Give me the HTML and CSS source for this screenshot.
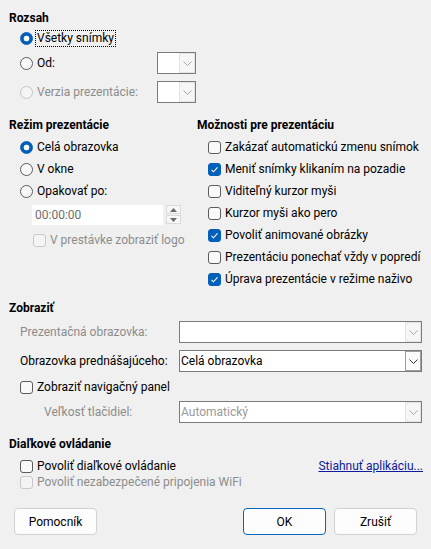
FILE: index.html
```html
<!DOCTYPE html>
<html lang="sk">
<head>
<meta charset="utf-8">
<title>Prezentácia</title>
<link rel="stylesheet" href="styles.css">
</head>
<body>
<div class="dlg">
  <div class="heading">Rozsah</div>
  <div class="row r1 indent"><span class="radio on"></span><span class="focus">Všetky snímky</span></div>
  <div class="row r2 rgrid">
    <div class="row indent"><span class="radio"></span><span>Od:</span></div>
    <div class="combo small"><span class="val"></span><span class="btn"><svg width="9" height="5" viewBox="0 0 9 5"><path d="M0.5 0.5l4 4 4-4" fill="none" stroke="#a8a8a8" stroke-width="1"/></svg></span></div>
  </div>
  <div class="row r3 rgrid">
    <div class="row indent dis"><span class="radio off"></span><span>Verzia prezentácie:</span></div>
    <div class="combo small"><span class="val"></span><span class="btn"><svg width="9" height="5" viewBox="0 0 9 5"><path d="M0.5 0.5l4 4 4-4" fill="none" stroke="#a8a8a8" stroke-width="1"/></svg></span></div>
  </div>

  <div class="cols">
    <div class="col">
      <div class="heading">Režim prezentácie</div>
      <div class="row first indent"><span class="radio on"></span><span>Celá obrazovka</span></div>
      <div class="row indent"><span class="radio"></span><span>V okne</span></div>
      <div class="row indent"><span class="radio"></span><span>Opakovať po:</span></div>
      <div class="timerow">
        <div class="time">00:00:00</div>
        <div class="spin">
          <span class="sbtn"><svg width="7" height="4" viewBox="0 0 7 4"><path d="M3.5 0L7 4H0z" fill="#6a6a6a"/></svg></span>
          <span class="sbtn"><svg width="7" height="4" viewBox="0 0 7 4"><path d="M0 0h7L3.5 4z" fill="#6a6a6a"/></svg></span>
        </div>
      </div>
      <div class="row logo dis"><span class="cb off"></span><span>V prestávke zobraziť logo</span></div>
    </div>
    <div class="col">
      <div class="heading">Možnosti pre prezentáciu</div>
      <div class="row first indent"><span class="cb"></span><span>Zakázať automatickú zmenu snímok</span></div>
      <div class="row indent"><span class="cb on"><svg width="13" height="13" viewBox="0 0 13 13"><path d="M3.5 6.8l2 2 4-4.4" fill="none" stroke="#fff" stroke-width="1.1"/></svg></span><span>Meniť snímky klikaním na pozadie</span></div>
      <div class="row indent"><span class="cb"></span><span>Viditeľný kurzor myši</span></div>
      <div class="row indent"><span class="cb"></span><span>Kurzor myši ako pero</span></div>
      <div class="row indent"><span class="cb on"><svg width="13" height="13" viewBox="0 0 13 13"><path d="M3.5 6.8l2 2 4-4.4" fill="none" stroke="#fff" stroke-width="1.1"/></svg></span><span>Povoliť animované obrázky</span></div>
      <div class="row indent"><span class="cb"></span><span>Prezentáciu ponechať vždy v popredí</span></div>
      <div class="row indent"><span class="cb on"><svg width="13" height="13" viewBox="0 0 13 13"><path d="M3.5 6.8l2 2 4-4.4" fill="none" stroke="#fff" stroke-width="1.1"/></svg></span><span>Úprava prezentácie v režime naživo</span></div>
    </div>
  </div>

  <div class="heading h-show">Zobraziť</div>
  <div class="fgrid f1">
    <span class="flabel dis">Prezentačná obrazovka:</span>
    <div class="combo wide"><span class="val"></span><span class="btn"><svg width="9" height="5" viewBox="0 0 9 5"><path d="M0.5 0.5l4 4 4-4" fill="none" stroke="#a8a8a8" stroke-width="1"/></svg></span></div>
  </div>
  <div class="fgrid f2">
    <span class="flabel">Obrazovka prednášajúceho:</span>
    <div class="combo wide"><span class="val">Celá obrazovka</span><span class="btn act"><svg width="9" height="5" viewBox="0 0 9 5"><path d="M0.5 0.5l4 4 4-4" fill="none" stroke="#303030" stroke-width="1"/></svg></span></div>
  </div>
  <div class="row f3 indent"><span class="cb"></span><span>Zobraziť navigačný panel</span></div>
  <div class="fgrid f4">
    <span class="flabel sub dis">Veľkosť tlačidiel:</span>
    <div class="combo wide"><span class="val dis2">Automatický</span><span class="btn"><svg width="9" height="5" viewBox="0 0 9 5"><path d="M0.5 0.5l4 4 4-4" fill="none" stroke="#a8a8a8" stroke-width="1"/></svg></span></div>
  </div>

  <div class="heading h-remote">Diaľkové ovládanie</div>
  <div class="row16 g1 indent"><span class="cb"></span><span>Povoliť diaľkové ovládanie</span><a class="link" href="#">Stiahnuť aplikáciu...</a></div>
  <div class="row16 indent dis"><span class="cb off"></span><span>Povoliť nezabezpečené pripojenia WiFi</span></div>

  <div class="btns">
    <button class="pbtn">Pomocník</button>
    <button class="pbtn ok">OK</button>
    <button class="pbtn">Zrušiť</button>
  </div>
</div>
</body>
</html>
```

FILE: styles.css
```css
html, body {
  margin: 0;
  background: #f0f0f0;
}
body {
  width: 431px;
  height: 549px;
  overflow: hidden;
  font-family: Roboto, "Noto Sans", "Liberation Sans", sans-serif;
  font-size: 12px;
  color: #000;
}
.dlg {
  padding: 10px 8px 0 9px;
}
.heading {
  font-weight: 700;
  height: 16px;
  line-height: 16px;
}
.row {
  display: flex;
  align-items: center;
  height: 22px;
  white-space: nowrap;
}
.indent {
  padding-left: 11px;
}
.r1 { margin-top: 1px; }
.r2 { margin-top: 3px; }
.r3 { margin-top: 7px; }
.rgrid {
  display: grid;
  grid-template-columns: 148px 39px;
  align-items: center;
}
.rgrid > .row { padding-left: 11px; }

.radio {
  flex: none;
  width: 13px;
  height: 13px;
  box-sizing: border-box;
  border: 1px solid #5b5b5b;
  border-radius: 50%;
  background: #f8f8f8;
  margin-right: 4px;
}
.radio.on {
  border-color: #005fb8;
  background: radial-gradient(circle, #fff 0 2.6px, #005fb8 3.2px);
}
.radio.off {
  border-color: #c4c4c4;
  background: #f4f4f4;
}
.focus {
  border: 1px dotted #000;
  padding: 0 1px;
  margin-left: -2px;
  line-height: 15px;
}
.cb {
  flex: none;
  width: 13px;
  height: 13px;
  box-sizing: border-box;
  border: 1px solid #5b5b5b;
  border-radius: 3px;
  background: #f9f9f9;
  margin-right: 4px;
  display: flex;
}
.cb svg { margin: -1px; }
.cb.on {
  background: #005fb8;
  border-color: #005fb8;
}
.cb.off {
  border-color: #c8c8c8;
  background: #f4f4f4;
}
.dis { color: #8c8c8c; }
.dis2 { color: #9a9a9a; }

.combo {
  display: flex;
  height: 22px;
  box-sizing: border-box;
  border: 1px solid #7b7b7b;
  background: #fff;
}
.combo .val {
  flex: 1;
  line-height: 20px;
  padding-left: 1px;
  white-space: nowrap;
}
.combo .btn {
  flex: none;
  width: 16px;
  box-sizing: border-box;
  border: 1px solid #e3e3e3;
  background: #f6f6f6;
  display: flex;
  align-items: center;
  justify-content: center;
}
.combo .btn.act {
  border-color: #9c9c9c;
  background: #fbfbfb;
}
.combo.small { width: 39px; }
.combo.small .btn { width: 16px; }

.cols {
  display: grid;
  grid-template-columns: 188px 1fr;
  margin-top: 14px;
}
.col .first { margin-top: 3px; }
.timerow {
  display: flex;
  margin: 3px 0 0 23px;
  height: 20px;
}
.time {
  width: 131px;
  height: 20px;
  box-sizing: border-box;
  background: #fff;
  color: #6e6e6e;
  line-height: 20px;
  padding-left: 3px;
}
.spin {
  margin-left: 3px;
  width: 15px;
  display: flex;
  flex-direction: column;
  gap: 1px;
  padding-top: 0;
}
.sbtn {
  height: 9px;
  box-sizing: border-box;
  border: 1px solid #dadada;
  background: #f7f7f7;
  display: flex;
  align-items: center;
  justify-content: center;
}
.logo {
  margin-top: 4px;
  padding-left: 24px;
}

.h-show { margin-top: 10px; }
.fgrid {
  display: grid;
  grid-template-columns: 170px 243px;
  align-items: center;
  height: 22px;
}
.flabel {
  padding-left: 11px;
  white-space: nowrap;
}
.flabel.sub { padding-left: 35px; }
.f1 { margin-top: 5px; }
.f2 { margin-top: 7px; }
.f3 { margin-top: 4px; }
.f4 { margin-top: 3px; }

.h-remote { margin-top: 13px; }
.row16 {
  display: flex;
  align-items: center;
  height: 16px;
  white-space: nowrap;
}
.g1 { margin-top: 6px; }
.link {
  margin-left: auto;
  color: #0c1a9c;
  text-decoration: underline;
}

.btns {
  display: flex;
  gap: 8px;
  margin-top: 18px;
  padding: 0 6px 0 5px;
}
.pbtn {
  width: 83px;
  height: 27px;
  box-sizing: border-box;
  border: 1px solid #d2d2d2;
  border-radius: 4px;
  background: #fdfdfd;
  font-family: inherit;
  font-size: 12px;
  color: #000;
  padding: 0;
}
.pbtn.ok {
  margin-left: auto;
  border-color: #0067c0;
}
```
